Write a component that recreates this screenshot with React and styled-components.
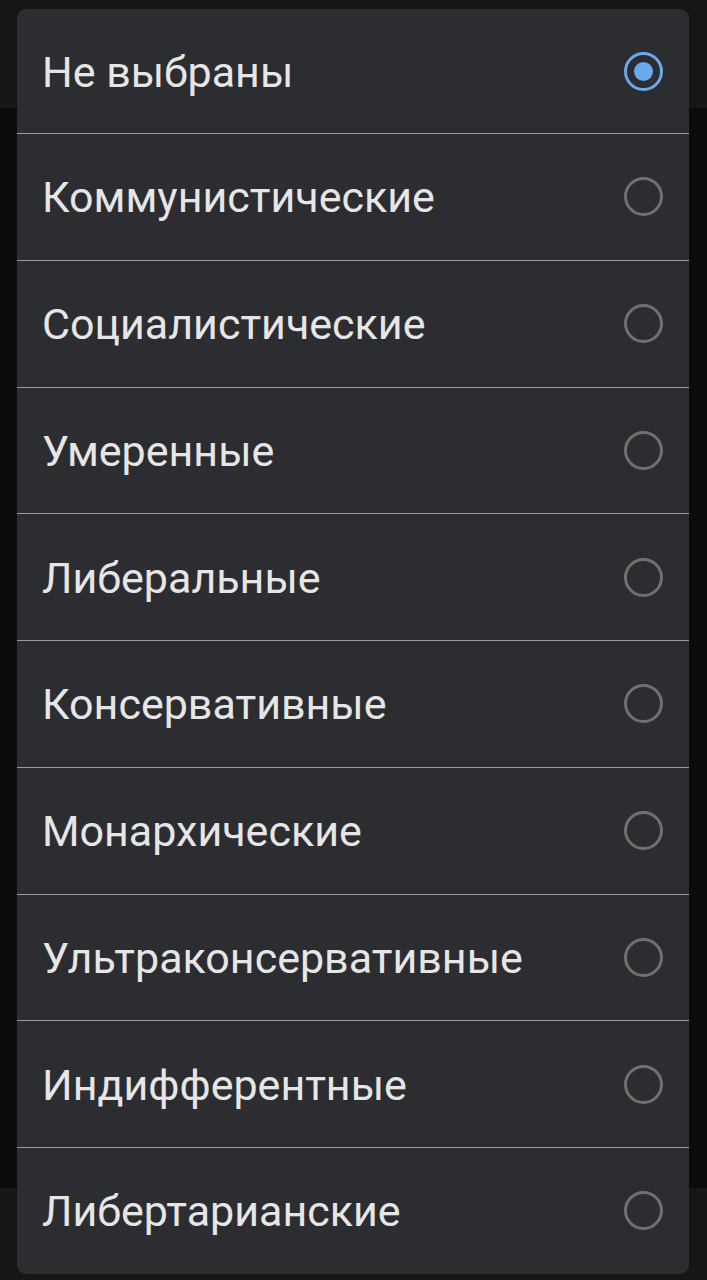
import React from 'react';
import styled, { createGlobalStyle } from 'styled-components';

const Global = createGlobalStyle`
  html, body {
    margin: 0;
    padding: 0;
    background: #0b0b0b;
  }
  body {
    font-family: Roboto, "Noto Sans", sans-serif;
  }
`;

const options = [
  "Не выбраны",
  "Коммунистические",
  "Социалистические",
  "Умеренные",
  "Либеральные",
  "Консервативные",
  "Монархические",
  "Ультраконсервативные",
  "Индифферентные",
  "Либертарианские",
];

export default function App() {
  const selected = 0;
  return (
    <Screen>
      <Global />
      <TopBar />
      <Middle />
      <BottomBar />
      <Dialog>
        {options.map((opt, i) => (
          <Option key={opt} first={i === 0}>
            <Label>{opt}</Label>
            <Radio checked={i === selected} />
          </Option>
        ))}
      </Dialog>
    </Screen>
  );
}

const Screen = styled.div`
  position: relative;
  width: 707px;
  height: 1280px;
  display: flex;
  flex-direction: column;
  overflow: hidden;
  background: #0b0b0b;
`;

const TopBar = styled.div`
  height: 108px;
  background: #161616;
`;

const Middle = styled.div`
  flex: 1;
  background: #0b0b0b;
`;

const BottomBar = styled.div`
  height: 92px;
  background: #161616;
`;

const Dialog = styled.div`
  position: absolute;
  top: 9px;
  left: 17px;
  width: 672px;
  background: #2c2d30;
  border-radius: 9px;
  overflow: hidden;
  display: flex;
  flex-direction: column;
`;

const Option = styled.div`
  box-sizing: border-box;
  height: ${(p) => (p.first ? '124px' : '126.75px')};
  display: flex;
  align-items: center;
  justify-content: space-between;
  padding: 0 26px 0 25px;
  border-top: ${(p) => (p.first ? 'none' : '1px solid #9c9c9c')};
  color: #e6e6e6;
`;

const Label = styled.span`
  font-size: 43px;
  line-height: 1;
  margin-top: 2px;
`;

const Radio = styled.div`
  box-sizing: border-box;
  width: 39px;
  height: 39px;
  border-radius: 50%;
  border: 3px solid ${(p) => (p.checked ? '#6aa9ec' : '#707070')};
  display: flex;
  align-items: center;
  justify-content: center;

  &::after {
    content: '';
    display: ${(p) => (p.checked ? 'block' : 'none')};
    width: 19px;
    height: 19px;
    border-radius: 50%;
    background: #6aa9ec;
  }
`;
